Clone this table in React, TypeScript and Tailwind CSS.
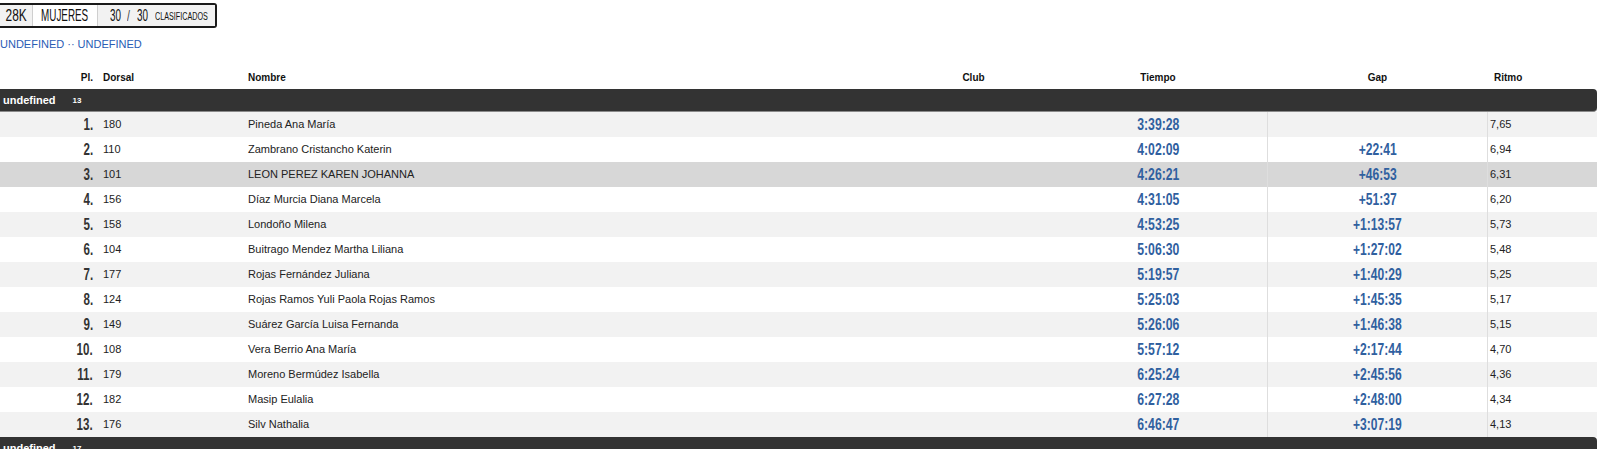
import React from "react";

const rows = [
  ["1", "180", "Pineda Ana María", "3:39:28", "", "7,65"],
  ["2", "110", "Zambrano Cristancho Katerin", "4:02:09", "+22:41", "6,94"],
  ["3", "101", "LEON PEREZ KAREN JOHANNA", "4:26:21", "+46:53", "6,31"],
  ["4", "156", "Díaz Murcia Diana Marcela", "4:31:05", "+51:37", "6,20"],
  ["5", "158", "Londoño Milena", "4:53:25", "+1:13:57", "5,73"],
  ["6", "104", "Buitrago Mendez Martha Liliana", "5:06:30", "+1:27:02", "5,48"],
  ["7", "177", "Rojas Fernández Juliana", "5:19:57", "+1:40:29", "5,25"],
  ["8", "124", "Rojas Ramos Yuli Paola Rojas Ramos", "5:25:03", "+1:45:35", "5,17"],
  ["9", "149", "Suárez García Luisa Fernanda", "5:26:06", "+1:46:38", "5,15"],
  ["10", "108", "Vera Berrio Ana María", "5:57:12", "+2:17:44", "4,70"],
  ["11", "179", "Moreno Bermúdez Isabella", "6:25:24", "+2:45:56", "4,36"],
  ["12", "182", "Masip Eulalia", "6:27:28", "+2:48:00", "4,34"],
  ["13", "176", "Silv Nathalia", "6:46:47", "+3:07:19", "4,13"],
];

const grid = "grid grid-cols-[98px_147px_653px_151px_218px_221px_109px]";

function GroupBar({ count }: { count: string }) {
  return (
    <div className="h-[23px] bg-[#333333] rounded-r-[4px] border-b border-[#8a8a8a] flex items-center pl-[3px] gap-[17px] text-white">
      <span className="text-[11px] font-bold">undefined</span>
      <span className="text-[8px] font-bold mt-[2px]">{count}</span>
    </div>
  );
}

export default function App() {
  return (
    <div className="w-[1600px] h-[449px] overflow-hidden bg-white font-['Liberation_Sans',Arial,sans-serif] text-[#111]">
      <div className="pt-[3px]">
        <div className="inline-flex h-[25px] border-2 border-l-0 border-[#1a1a1a] rounded-r-[3px] overflow-hidden text-[#111]">
          <div className="w-[33px] bg-[#f2f2f2] border-r border-[#cfcfcf] flex items-center justify-center">
            <span className="inline-block text-[17px] scale-x-[0.7] leading-none">28K</span>
          </div>
          <div className="w-[65px] bg-white border-r border-[#cfcfcf] flex items-center justify-center">
            <span className="inline-block text-[17px] scale-x-[0.58] leading-none">MUJERES</span>
          </div>
          <div className="w-[117px] bg-[#f2f2f2] flex items-center pl-[12px]">
            <span className="inline-block w-[17px] shrink-0 leading-none">
              <span className="inline-block text-[17px] scale-x-[0.58] origin-left">30</span>
            </span>
            <span className="inline-block w-[10px] shrink-0 leading-none">
              <span className="inline-block text-[15px] scale-x-[0.7] origin-left text-[#444]">/</span>
            </span>
            <span className="inline-block w-[18px] shrink-0 leading-none">
              <span className="inline-block text-[17px] scale-x-[0.58] origin-left">30</span>
            </span>
            <span className="inline-block text-[10px] scale-x-[0.72] origin-left leading-none mt-[3px] whitespace-nowrap">CLASIFICADOS</span>
          </div>
        </div>
      </div>
      <div className="mt-[8px] h-[16px] flex items-center text-[11px] text-[#2a5cb5] whitespace-pre">UNDEFINED ·· UNDEFINED</div>

      <div className="w-[1597px] mt-[14px]">
        <div className={`${grid} h-[23px] items-center text-[10px] font-bold text-[#111]`}>
          <div className="text-right pr-[5px]">Pl.</div>
          <div className="pl-[5px]">Dorsal</div>
          <div className="pl-[3px]">Nombre</div>
          <div className="text-center">Club</div>
          <div className="text-center">Tiempo</div>
          <div className="text-center">Gap</div>
          <div className="pl-[6px]">Ritmo</div>
        </div>
        <GroupBar count="13" />
        {rows.map((r, i) => {
          const bg = i === 2 ? "bg-[#d7d7d7]" : i % 2 === 0 ? "bg-[#f2f2f2]" : "bg-white";
          return (
            <div key={r[0]} className={`${grid} h-[25px] items-center text-[11px] ${bg}`}>
              <div className="pr-[5px] h-full flex items-center justify-end">
                <span className="inline-block font-bold text-[17px] leading-none text-[#333] scale-x-[0.68] origin-right">{r[0]}.</span>
              </div>
              <div className="pl-[5px] text-[#222]">{r[1]}</div>
              <div className="pl-[3px] text-[#222]">{r[2]}</div>
              <div></div>
              <div className="h-full flex items-center justify-center">
                <span className="inline-block font-bold text-[17px] leading-none text-[#30609f] scale-x-[0.72]">{r[3]}</span>
              </div>
              <div className="h-full flex items-center justify-center border-l border-r border-[#dedede]">
                <span className="inline-block font-bold text-[17px] leading-none text-[#30609f] scale-x-[0.71]">{r[4]}</span>
              </div>
              <div className="pl-[2px] text-[#222]">{r[5]}</div>
            </div>
          );
        })}
        <GroupBar count="17" />
      </div>
    </div>
  );
}
